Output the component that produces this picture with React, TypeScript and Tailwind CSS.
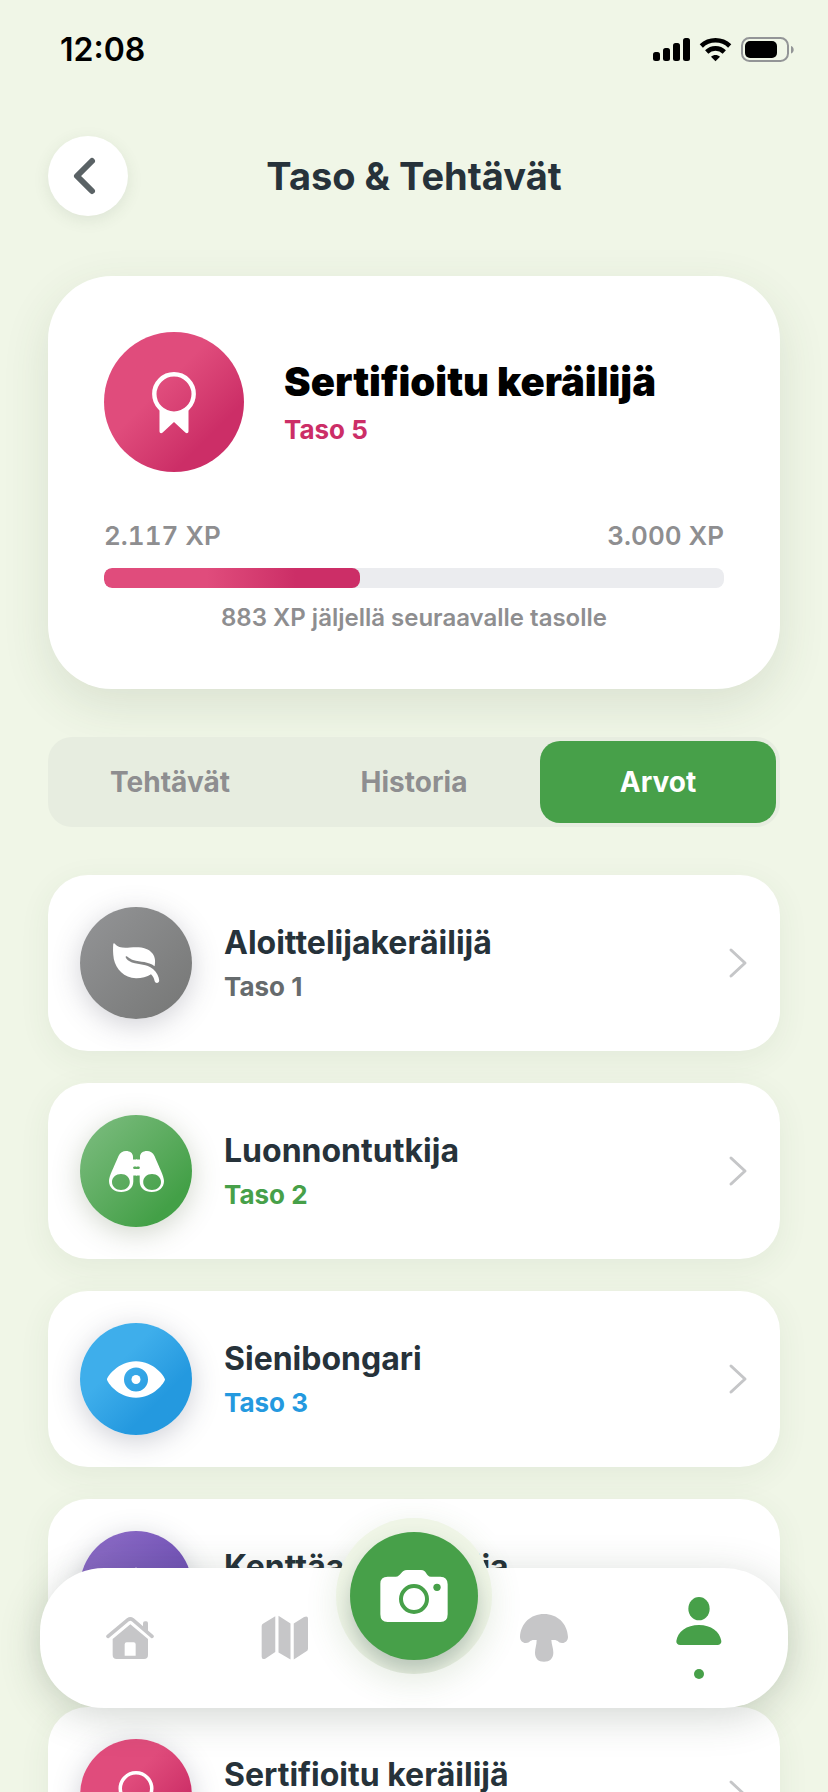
import { useState } from "react";
import type { ReactNode } from "react";

const TABS = ["Tehtävät", "Historia", "Arvot"] as const;

type Rank = {
  title: string;
  level: number;
  text: string;
  badge: string;
  icon: ReactNode;
};

function MedalIcon() {
  return (
    <svg viewBox="0 0 140 140" className="size-full" fill="none" aria-hidden="true">
      <circle cx="70" cy="62" r="19.7" stroke="white" strokeWidth="4.4" />
      <path d="M55.5 77c8 5 21 5 29 0v22.300c0 2-1.800 2.600-3.200 1.300L70 90l-11.300 10.600c-1.400 1.300-3.200.7-3.200-1.300z" fill="white" />
    </svg>
  );
}

function LeafIcon() {
  return (
    <svg viewBox="0 0 112 112" className="size-full" aria-hidden="true">
      <path
        fill="white"
        d="M35 37C38 41 44 41 50 40.500C60 39.500 68 40.500 72.500 46.500C75.500 50.500 75.500 55 74.600 59.300C68 54 61 55.500 53 53C49 51.700 47.500 49 46 49.300C44.500 50.500 48 54 52 55.500C60 58 66 56.500 73 62C77 65.500 79 70 79.200 73.500C79.300 76.500 75.200 76.800 74.600 74C74 71.500 73 69 71 67.300C67 70 61 71.300 56 71.200C44 71 36 62 33.800 52C32.800 46 33 41 33.200 37.600C33.400 36 34.400 36 35 37Z"
      />
    </svg>
  );
}

function BinocularsIcon() {
  const barrel =
    "M29 66C29 61 34 52 38.500 41C40 37.500 43 36 46 36C50 36 53 38 53 42V44.500H57V51.500H54.500C52.700 51.500 52.700 54 54.500 54H57V60.500H53.300V66.500C53.300 73 48 77 41.200 77C34 77 29 72.500 29 66ZM32 67C32 71.600 36 75 41 75C46 75 49.800 71.600 49.800 67C49.800 62.400 46 59 41 59C36 59 32 62.400 32 67Z";
  return (
    <svg viewBox="0 0 112 112" className="size-full" aria-hidden="true">
      <path fill="white" fillRule="evenodd" d={barrel} />
      <path fill="white" fillRule="evenodd" d={barrel} transform="translate(113 0) scale(-1 1)" />
    </svg>
  );
}

function EyeIcon() {
  return (
    <svg viewBox="0 0 112 112" className="size-full" aria-hidden="true">
      <path
        fill="white"
        fillRule="evenodd"
        d="M27 56.500C27 54 38 38.300 56 38.300C74 38.300 85 54 85 56.500C85 59 74 74.800 56 74.800C38 74.800 27 59 27 56.500ZM44 56.500a12 12 0 1 0 24 0a12 12 0 1 0-24 0Z"
      />
      <circle cx="56" cy="56.500" r="4.500" fill="white" />
    </svg>
  );
}

function CompassIcon() {
  return (
    <svg viewBox="0 0 112 112" className="size-full" aria-hidden="true">
      <path d="M56 36l20 40-20-9-20 9z" fill="white" />
    </svg>
  );
}

const RANKS: Rank[] = [
  {
    title: "Aloittelijakeräilijä",
    level: 1,
    text: "text-[#666b6d]",
    badge: "from-[#949597] to-[#757675] shadow-[0_6px_28px_rgba(70,72,90,0.25)]",
    icon: <LeafIcon />,
  },
  {
    title: "Luonnontutkija",
    level: 2,
    text: "text-[#47a049]",
    badge: "from-[#74b877] from-15% to-[#43a047] to-80% shadow-[0_6px_28px_rgba(70,90,50,0.25)]",
    icon: <BinocularsIcon />,
  },
  {
    title: "Sienibongari",
    level: 3,
    text: "text-[#2499df]",
    badge: "from-[#3eaeeb] from-35% to-[#2499df] to-70% shadow-[0_6px_28px_rgba(60,62,90,0.25)]",
    icon: <EyeIcon />,
  },
  {
    title: "Kenttäasiantuntija",
    level: 4,
    text: "text-[#7151b7]",
    badge: "from-[#8666c2] from-20% to-[#6a4ab2] to-80% shadow-[0_6px_28px_rgba(60,62,90,0.25)]",
    icon: <CompassIcon />,
  },
  {
    title: "Sertifioitu keräilijä",
    level: 5,
    text: "text-[#cc2e67]",
    badge: "from-[#e04c7c] from-40% to-[#cc2e67] to-75% shadow-[0_6px_28px_rgba(60,62,90,0.25)]",
    icon: <MedalIcon />,
  },
];

function StatusBar() {
  return (
    <div className="flex h-[100px] items-center justify-between pr-[34px] pl-[60px] text-black">
      <span className="text-[32px] leading-10 font-semibold">12:08</span>
      <svg width="142" height="26" viewBox="0 0 142 26" aria-label="Signaali, wifi ja akku" role="img">
        <rect x="1" y="15" width="7" height="9" rx="2.500" />
        <rect x="11" y="11" width="7" height="13" rx="2.500" />
        <rect x="21" y="6" width="7" height="18" rx="2.500" />
        <rect x="31" y="1" width="7" height="23" rx="2.500" />
        <g fill="none" stroke="black" strokeWidth="4.600">
          <path d="M49.300 9A20.500 20.500 0 0 1 77.700 9" />
          <path d="M54.700 15A12.500 12.500 0 0 1 72.300 15" />
        </g>
        <path d="M63.500 24.300l-4.500-4.600c2.500-2.300 6.500-2.300 9 0z" />
        <rect x="90" y="1" width="46" height="23" rx="7.500" fill="none" stroke="#939597" strokeWidth="2" />
        <rect x="93" y="4" width="32" height="17" rx="5" />
        <path d="M139 9c3.600 1 3.600 6.500 0 7.500z" fill="#939597" />
      </svg>
    </div>
  );
}

function LevelCard() {
  const xp = 2117;
  const left = 883;
  // progress counts from the level's own starting XP
  const levelStart = 1498;
  const progress = ((xp - levelStart) / (xp + left - levelStart)) * 100;

  return (
    <section className="mt-[60px] rounded-[64px] bg-white px-14 pt-14 pb-[53px] shadow-[0_16px_48px_rgba(60,80,50,0.12)]">
      <div className="flex items-center gap-10">
        <div className="size-[140px] shrink-0 rounded-full bg-linear-135 from-[#e04c7c] from-40% to-[#cc2e67] to-75%">
          <MedalIcon />
        </div>
        <div className="min-w-0 pt-1">
          <h2 className="text-[40px] leading-[52px] font-black text-black">Sertifioitu keräilijä</h2>
          <p className="text-[26px] leading-11 font-bold text-[#cc2e67]">Taso 5</p>
        </div>
      </div>
      <div className="mt-12 flex justify-between text-[26px] leading-8 font-semibold text-[#8e8e90] tabular-nums">
        <span>2.117 XP</span>
        <span>3.000 XP</span>
      </div>
      <div
        className="mt-4 h-5 overflow-hidden rounded-lg bg-[#ebecef]"
        role="progressbar"
        aria-label="XP"
        aria-valuenow={xp}
        aria-valuemin={levelStart}
        aria-valuemax={xp + left}
      >
        <div
          className="h-full rounded-lg bg-linear-to-r from-[#e04c7c] from-40% to-[#cc2e67] to-75%"
          style={{ width: `${progress}%` }}
        />
      </div>
      <p className="mt-3 text-center text-2xl leading-9 font-semibold text-[#8e8e90]">
        883 XP jäljellä seuraavalle tasolle
      </p>
    </section>
  );
}

function RankRow({ rank }: { rank: Rank }) {
  return (
    <button className="flex w-full cursor-pointer items-center gap-8 rounded-[40px] bg-white p-8 text-left shadow-[0_8px_32px_rgba(60,80,50,0.07)]">
      <span className={`block size-28 shrink-0 rounded-full bg-linear-135 ${rank.badge}`}>{rank.icon}</span>
      <span className="min-w-0 flex-1 pt-1">
        <span className="block text-[32px] leading-11 font-bold text-[#26323a]">{rank.title}</span>
        <span className={`block text-[26px] leading-11 font-bold ${rank.text}`}>Taso {rank.level}</span>
      </span>
      <svg width="20" height="32" viewBox="0 0 20 32" fill="none" stroke="#c5c6c8" strokeWidth="3" strokeLinecap="round" strokeLinejoin="round" aria-hidden="true">
        <path d="M3 3l14 13L3 29" />
      </svg>
    </button>
  );
}

function BottomNav() {
  return (
    <nav className="fixed inset-x-10 bottom-[84px] flex h-[140px] items-stretch rounded-[64px] bg-white px-3 shadow-[0_8px_40px_rgba(50,70,50,0.22)]">
      <a href="#koti" aria-label="Koti" className="flex flex-1 items-center justify-center text-[#c6c6c8]">
        <svg width="48" height="44" viewBox="317 408 144 132" fill="currentColor" aria-hidden="true">
          <path d="M323 469L383 419Q390 414 397 419L455 469" fill="none" stroke="currentColor" strokeWidth="11" strokeLinecap="round" />
          <path d="M428 430Q428 424 434 424H438Q443 424 443 430V458L428 445Z" />
          <path fillRule="evenodd" d="M337 477L390 433L443 477V525Q443 537 431 537H349Q337 537 337 525ZM373 493V527H406V493Q406 487 400 487H379Q373 487 373 493Z" />
        </svg>
      </a>
      <a href="#kartta" aria-label="Kartta" className="flex flex-1 items-center justify-center text-[#c6c6c8]">
        <svg width="48" height="46" viewBox="782 404 146 142" fill="currentColor" aria-hidden="true">
          <path d="M783 438Q783 432 788 430L825 408V518L794 539Q783 543 783 533Z" />
          <path d="M835 406L872 430V541L835 520Z" />
          <path d="M882 430L914 410Q926 405 926 415V508Q926 514 920 517L882 541Z" />
        </svg>
      </a>
      <div className="w-[104px] shrink-0" />
      <a href="#sienet" aria-label="Sienet" className="flex flex-1 items-center justify-center text-[#c6c6c8]">
        <svg width="48" height="48" viewBox="336 402 144 144" fill="currentColor" aria-hidden="true">
          <path d="M336 471C338 430 368 402 408 402C448 402 478 430 480 471C480 483 470 490 462 489C450 488 450 480 438 480H430C431 495 436 505 436 518C436 535 425 545 408 545C391 545 381 535 381 518C381 505 386 495 386 480H378C366 480 366 488 354 489C346 490 336 483 336 471Z" />
        </svg>
      </a>
      <a href="#profiili" aria-label="Profiili" aria-current="page" className="flex flex-1 flex-col items-center justify-center gap-6 text-[#47a049]">
        <svg width="46" height="48" viewBox="803 351 138 144" fill="currentColor" aria-hidden="true">
          <ellipse cx="872" cy="386" rx="32" ry="35" />
          <path d="M804 483C808 455 835 435 872 435C908 435 935 455 939 483C940 490 935 495 927 495H816C808 495 803 490 804 483Z" />
        </svg>
        <span className="size-2.5 rounded-full bg-[#47a049]" />
      </a>

      {/* Camera button, raised over the bar */}
      <button
        aria-label="Kamera"
        className="absolute -top-[50px] left-1/2 size-[156px] -translate-x-1/2 cursor-pointer overflow-hidden rounded-full bg-[#eff5e6] p-3.5 shadow-[0_8px_32px_rgba(80,120,60,0.14)]"
      >
        <span className="flex size-32 items-center justify-center rounded-full bg-[#47a049] shadow-[0_12px_20px_rgba(60,90,80,0.3)]">
          <svg width="68" height="52" viewBox="-85 273 204 156" aria-hidden="true">
            <path
              fill="white"
              d="M-62 293H-38C-22 293 -22 273 -4 273H38C56 273 52 293 68 293H96Q118 293 118 316V406Q118 429 96 429H-62Q-84 429 -84 406V314Q-84 293 -62 293Z"
            />
            <circle cx="17" cy="360" r="39" fill="none" stroke="#47a049" strokeWidth="12" />
            <circle cx="86" cy="325" r="11" fill="#47a049" />
          </svg>
        </span>
      </button>
    </nav>
  );
}

export default function App() {
  const [tab, setTab] = useState<string>("Arvot");

  return (
    <div className="h-screen overflow-y-auto bg-[#f0f6e7] font-['Inter','Liberation_Sans',sans-serif] [scrollbar-width:none]">
      <StatusBar />
      <main className="px-12 pt-9 pb-64">
        <header className="grid grid-cols-[80px_1fr_80px] items-center">
          <button
            aria-label="Takaisin"
            className="flex size-20 cursor-pointer items-center justify-center rounded-full bg-white shadow-[0_4px_16px_rgba(60,80,60,0.1)]"
          >
            <svg width="32" height="40" viewBox="0 0 32 40" fill="none" stroke="#5a6265" strokeWidth="6" strokeLinecap="round" strokeLinejoin="round" aria-hidden="true">
              <path d="M20 5L5 20L20 35" />
            </svg>
          </button>
          <h1 className="text-center text-[38px] leading-[48px] font-bold text-[#26323a]">Taso &amp; Tehtävät</h1>
        </header>

        <LevelCard />

        <div role="tablist" className="mt-12 grid h-[90px] grid-cols-3 gap-2 rounded-3xl bg-[#e7ede0] p-1">
          {TABS.map((name) => (
            <button
              key={name}
              role="tab"
              aria-selected={tab === name}
              onClick={() => setTab(name)}
              className={`cursor-pointer rounded-[20px] text-[28px] font-bold ${tab === name ? "bg-[#47a049] text-white" : "text-[#8e8e90]"}`}
            >
              {name}
            </button>
          ))}
        </div>

        <div className="mt-12 flex flex-col gap-8">
          {RANKS.map((rank) => (
            <RankRow key={rank.level} rank={rank} />
          ))}
        </div>
      </main>
      <BottomNav />
    </div>
  );
}
